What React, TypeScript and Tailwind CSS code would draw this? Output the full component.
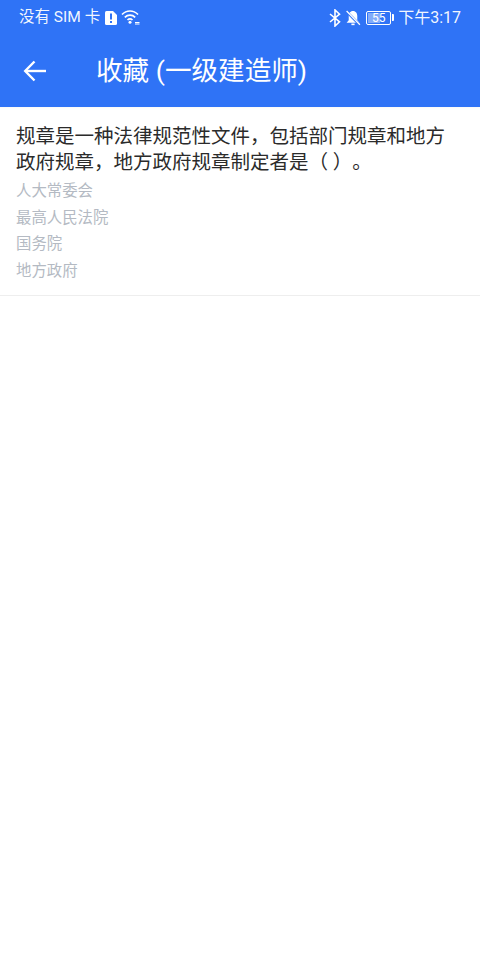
const font = { fontFamily: 'Roboto, "Noto Sans CJK SC", sans-serif' };

function SimAlert() {
  return (
    <svg width="14" height="16" viewBox="0 0 14 16" className="ml-[4px]">
      <path d="M2.500 1H9L13 5V13.500Q13 15 11.500 15H2.500Q1 15 1 13.500V2.500Q1 1 2.500 1Z" fill="#fff" />
      <rect x="6" y="3.500" width="2" height="6" fill="#2f73f6" />
      <rect x="6" y="11" width="2" height="2" fill="#2f73f6" />
    </svg>
  );
}

function Wifi() {
  return (
    <svg width="19" height="16" viewBox="0 0 19 16" fill="none" stroke="#fff" strokeWidth="1.700" className="ml-[3px] -translate-y-[1px]">
      <path d="M1 5.500C5.500 0.800 12.500 0.800 17 5.500" />
      <path d="M3.800 8.300C6.800 5.300 11.200 5.300 14.200 8.300" />
      <path d="M6.500 11C8 9.600 10 9.600 11.500 11" />
      <circle cx="9" cy="13.300" r="1.500" fill="#fff" stroke="none" />
      <path d="M14 13.500H18.500M14 15H18.500" strokeWidth="1" />
    </svg>
  );
}

function Bluetooth() {
  return (
    <svg width="12" height="18" viewBox="0 0 12 18" fill="none" stroke="#fff" strokeWidth="1.600">
      <path d="M1 5L10.500 12.800L6 17V1L10.500 5.200L1 13" />
    </svg>
  );
}

function BellOff() {
  return (
    <svg width="16" height="16" viewBox="0 0 15 15" className="ml-[4px]">
      <path d="M7.500 1C4.800 1 3.500 3.300 3.500 5.500V9.500L1.500 12H13.500L11.500 9.500V5.500C11.500 3.300 10.200 1 7.500 1Z" fill="#fff" />
      <rect x="6" y="12.700" width="3" height="1.500" fill="#fff" />
      <path d="M1.500 1.500L13.800 14" stroke="#2f73f6" strokeWidth="2.500" />
      <path d="M1.500 1L14 13.800" stroke="#fff" strokeWidth="1.200" />
    </svg>
  );
}

function Battery() {
  return (
    <div className="ml-[5px] flex items-center">
      <div className="relative flex h-[14px] w-[25px] items-center justify-center rounded-[2px] border border-white text-[12px] leading-none text-white">
        <div className="absolute inset-y-[1px] left-[1px] w-[12px] bg-white/40" />
        <span className="relative">55</span>
      </div>
      <div className="ml-[1px] h-[7px] w-[2px] rounded-r-[1px] bg-white" />
    </div>
  );
}

export default function App() {
  const options = ["人大常委会", "最高人民法院", "国务院", "地方政府"];

  return (
    <div className="flex h-[960px] w-[480px] flex-col bg-white [text-spacing-trim:space-all]" style={font}>
      {/* Status bar */}
      <div className="flex h-[34px] items-center justify-between bg-[#2f73f6] px-[19px] pt-[1px] text-[15.500px] text-white/95">
        <div className="flex items-center">
          <span>没有 SIM 卡</span>
          <SimAlert />
          <Wifi />
        </div>
        <div className="flex items-center">
          <Bluetooth />
          <BellOff />
          <Battery />
          <span className="ml-[4px] text-[16px]">下午3:17</span>
        </div>
      </div>

      {/* Title bar */}
      <div className="flex h-[73px] items-center bg-[#2f73f6] text-white">
        <svg width="24" height="24" viewBox="0 0 24 24" fill="none" stroke="#fff" strokeWidth="2.400" className="ml-[23px]">
          <path d="M23 12H2.500" />
          <path d="M11.500 2.500L2.200 12L11.500 21.500" />
        </svg>
        <div className="ml-[49px] mt-[2px] text-[26.600px] leading-none">收藏 (一级建造师)</div>
      </div>

      {/* Question */}
      <div className="border-b border-[#eeeeee] px-4 pb-[11px] pt-[17px] shadow-[inset_0_2px_2px_-2px_rgba(0,0,0,0.08)]">
        <div className="text-[19.500px] leading-[26px] text-[#2b2b2b]">
          规章是一种法律规范性文件，包括部门规章和地方政府规章，地方政府规章制定者是（ ）。
        </div>
        <div className="mt-[2px]">
          {options.map((o) => (
            <div key={o} className="h-[26.600px] text-[15.400px] leading-[26px] text-[#b4bac3]">
              {o}
            </div>
          ))}
        </div>
      </div>
    </div>
  );
}
